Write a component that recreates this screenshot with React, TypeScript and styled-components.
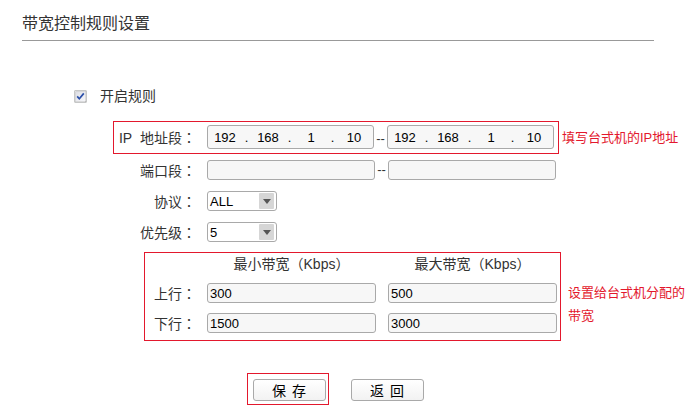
import React from "react";
import styled, { createGlobalStyle } from "styled-components";

const GlobalStyle = createGlobalStyle`
  html, body { margin: 0; padding: 0; background: #fff; }
  body {
    font-family: "Liberation Sans", "Noto Sans CJK SC", sans-serif;
    font-size: 14px;
    color: #333;
  }
`;

const RED = "#e3182d";

const Page = styled.div`
  width: 686px;
  height: 411px;
  overflow: hidden;
`;

const Header = styled.h1`
  margin: 0 32px 0 22px;
  padding: 12px 0 4px;
  font-size: 16px;
  font-weight: normal;
  line-height: 24px;
  color: #333;
  border-bottom: 1px solid #999;
`;

const Form = styled.div`
  padding-top: 45px;
`;

const CheckRow = styled.label`
  display: flex;
  align-items: center;
  gap: 13px;
  height: 20px;
  margin-left: 74px;
  line-height: 20px;
`;

const Row = styled.div<{ $top: number }>`
  display: flex;
  align-items: center;
  height: 20px;
  margin: ${(p) => p.$top}px 0 0 116px;
`;

const IpRow = styled.div`
  display: flex;
  align-items: center;
  margin: 15px 0 0 113px;
`;

const Highlight = styled.div`
  display: flex;
  align-items: center;
  border: 1px solid ${RED};
  padding: 3px 4px 4px 2px;
`;

const Note = styled.span`
  margin-left: 3px;
  font-size: 13px;
  color: ${RED};
  white-space: nowrap;
  line-height: 20px;
`;

const Label = styled.span<{ $w: number }>`
  width: ${(p) => p.$w}px;
  height: 20px;
  overflow: hidden;
  margin-right: 11px;
  text-align: right;
  line-height: 20px;
  white-space: nowrap;
`;

/* full-width punctuation drawn centred in its box, as in the original */
const Punct = styled.span`
  font-family: "Noto Sans CJK TC", sans-serif;
`;

const Dash = styled.span<{ $low?: boolean }>`
  width: 13px;
  padding-top: ${(p) => (p.$low ? 4 : 0)}px;
  text-align: center;
  line-height: 20px;
  font-size: 13px;
  color: #333;
`;

const TextInput = styled.input<{ $w: number }>`
  box-sizing: border-box;
  width: ${(p) => p.$w}px;
  height: 20px;
  margin: 0;
  padding: 0 2px;
  border: 1px solid #a9a9a9;
  border-radius: 3px;
  background: #f7f7f7;
  font-family: "Liberation Sans", sans-serif;
  font-size: 13px;
  color: #000;
  outline: none;
`;

const IpBox = styled.div`
  box-sizing: border-box;
  display: flex;
  align-items: center;
  width: 167px;
  height: 24px;
  border: 1px solid #a9a9a9;
  border-radius: 3px;
  background: #f7f7f7;
  font-family: "Liberation Sans", sans-serif;
  font-size: 13px;
  color: #000;
`;

const Octet = styled.span`
  width: 34px;
  text-align: center;
`;

const Dot = styled.span`
  width: 9px;
  text-align: center;
`;

const SelectBox = styled.div`
  box-sizing: border-box;
  display: flex;
  align-items: center;
  justify-content: space-between;
  width: 70px;
  height: 20px;
  padding: 0 2px;
  border: 1px solid #a9a9a9;
  border-radius: 3px;
  background: #fff;
  font-family: "Liberation Sans", sans-serif;
  font-size: 13px;
  color: #000;
`;

const SelectArrow = styled.span`
  display: flex;
  align-items: center;
  justify-content: center;
  width: 15px;
  height: 16px;
  background: #d6d6d6;
  border-radius: 1px;
`;

const BwWrap = styled.div`
  display: flex;
  align-items: flex-start;
  margin: 10px 0 0 144px;
`;

const BwBox = styled.div`
  border: 1px solid ${RED};
  padding: 0 3px 7px 0;
`;

const BwHeader = styled.div`
  display: flex;
  gap: 12px;
  height: 20px;
  padding-left: 62px;
  line-height: 20px;
`;

const BwTitle = styled.span`
  width: 169px;
  height: 20px;
  overflow: hidden;
  text-align: center;
  white-space: nowrap;
`;

const BwRow = styled.div`
  display: flex;
  align-items: center;
  height: 20px;
  margin-top: 10px;
  gap: 12px;
`;

const BwLabel = styled(Label)`
  margin-right: -1px;
`;

const BwNote = styled.div`
  width: 118px;
  margin: 29px 0 0 7px;
  font-size: 13px;
  line-height: 23px;
  color: ${RED};
`;

const Buttons = styled.div`
  display: flex;
  align-items: flex-start;
  margin: 32px 0 0 247px;
`;

const ButtonFrame = styled.div`
  border: 1px solid ${RED};
  padding: 5px 2px 3px 5px;
`;

const Button = styled.button<{ $gap?: number }>`
  box-sizing: border-box;
  width: 73px;
  height: 22px;
  margin: ${(p) => (p.$gap ? `6px 0 0 ${p.$gap}px` : "0")};
  padding: 0;
  border: 1px solid #a9a9a9;
  border-radius: 3px;
  background: linear-gradient(#ffffff, #f2f2f2);
  font-family: "Liberation Sans", "Noto Sans CJK SC", sans-serif;
  font-size: 14px;
  letter-spacing: 1px;
  color: #000;
`;

const CheckIcon = () => (
  <svg width="13" height="13" viewBox="0 0 13 13">
    <defs>
      <linearGradient id="cb" x1="0" y1="0" x2="1" y2="1">
        <stop offset="0" stopColor="#dcdde4" />
        <stop offset="1" stopColor="#f8f8fb" />
      </linearGradient>
    </defs>
    <rect x="0.5" y="0.5" width="12" height="12" fill="#8e8f8f" />
    <rect x="1.5" y="1.5" width="10" height="10" fill="url(#cb)" stroke="#f4f4f4" strokeWidth="0.5" />
    <path d="M3.2 6.4 L5.3 8.8 L9.8 3.4" fill="none" stroke="#2b4fa8" strokeWidth="1.7" />
  </svg>
);

const ArrowIcon = () => (
  <svg width="8" height="5" viewBox="0 0 8 5">
    <path d="M0 0 H8 L4 5 Z" fill="#555" />
  </svg>
);

const IpField: React.FC<{ ip: string[] }> = ({ ip }) => (
  <IpBox>
    {ip.map((o, i) => (
      <React.Fragment key={i}>
        {i > 0 && <Dot>.</Dot>}
        <Octet>{o}</Octet>
      </React.Fragment>
    ))}
  </IpBox>
);

const Select: React.FC<{ value: string }> = ({ value }) => (
  <SelectBox>
    <span>{value}</span>
    <SelectArrow>
      <ArrowIcon />
    </SelectArrow>
  </SelectBox>
);

const FieldLabel: React.FC<{ w: number; text: string; bw?: boolean }> = ({ w, text, bw }) => {
  const L = bw ? BwLabel : Label;
  return (
    <L $w={w}>
      {text}
      <Punct>：</Punct>
    </L>
  );
};

const RateTitle: React.FC<{ name: string }> = ({ name }) => (
  <BwTitle>
    {name}
    <Punct>（</Punct>Kbps<Punct>）</Punct>
  </BwTitle>
);

const ip = ["192", "168", "1", "10"];

export default function App() {
  return (
    <Page>
      <GlobalStyle />
      <Header>带宽控制规则设置</Header>
      <Form>
        <CheckRow>
          <CheckIcon />
          <span>开启规则</span>
        </CheckRow>

        <IpRow>
          <Highlight>
            <FieldLabel w={80} text={"IP\u00a0\u00a0地址段"} />
            <IpField ip={ip} />
            <Dash $low>--</Dash>
            <IpField ip={ip} />
          </Highlight>
          <Note>填写台式机的IP地址</Note>
        </IpRow>

        <Row $top={6}>
          <FieldLabel w={80} text="端口段" />
          <TextInput $w={168} readOnly value="" />
          <Dash>--</Dash>
          <TextInput $w={168} readOnly value="" />
        </Row>

        <Row $top={11}>
          <FieldLabel w={80} text="协议" />
          <Select value="ALL" />
        </Row>

        <Row $top={11}>
          <FieldLabel w={80} text="优先级" />
          <Select value="5" />
        </Row>

        <BwWrap>
          <BwBox>
            <BwHeader>
              <RateTitle name="最小带宽" />
              <RateTitle name="最大带宽" />
            </BwHeader>
            <BwRow>
              <FieldLabel bw w={51} text="上行" />
              <TextInput $w={169} readOnly value="300" />
              <TextInput $w={169} readOnly value="500" />
            </BwRow>
            <BwRow>
              <FieldLabel bw w={51} text="下行" />
              <TextInput $w={169} readOnly value="1500" />
              <TextInput $w={169} readOnly value="3000" />
            </BwRow>
          </BwBox>
          <BwNote>设置给台式机分配的带宽</BwNote>
        </BwWrap>

        <Buttons>
          <ButtonFrame>
            <Button>保 存</Button>
          </ButtonFrame>
          <Button $gap={22}>返 回</Button>
        </Buttons>
      </Form>
    </Page>
  );
}
